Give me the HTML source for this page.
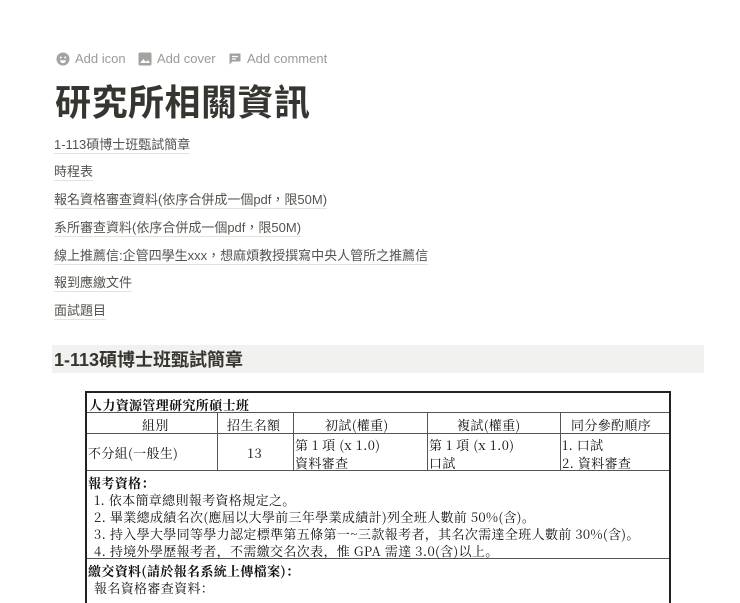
<!DOCTYPE html>
<html><head><meta charset="utf-8"><style>
body{margin:0;width:740px;height:593px;overflow:hidden;background:#fff;font-family:"Liberation Sans","Noto Sans CJK TC",sans-serif;color:#37352f;position:relative}
.a{position:absolute;white-space:nowrap}
.top{top:51px;font-size:13px;color:#9b9a97;display:flex;align-items:center;gap:5px}
.lk{font-size:13px;left:54px;color:#55534e;border-bottom:1px solid #e3e2df;line-height:17px}
.tb{position:absolute;left:85px;top:391px;width:582px;border:2px solid #222;border-bottom:none;font-family:"Noto Serif CJK SC","WenQuanYi Zen Hei",serif;color:#111;font-size:13px;letter-spacing:0.35px;height:210px}
.tb div{position:absolute;white-space:nowrap}
.h{border-top:1px solid #555}
.v{border-left:1px solid #555;top:20px;height:58px}
</style></head><body>
<div class="a top" style="left:56px"><svg width="14" height="14"><circle cx="7" cy="7" r="6.5" fill="#a3a29f"/><circle cx="4.8" cy="5.5" r="1" fill="#fff"/><circle cx="9.2" cy="5.5" r="1" fill="#fff"/><path d="M4 8.3h6a3 3 0 0 1-6 0z" fill="#fff"/></svg>Add icon</div>
<div class="a top" style="left:138px"><svg width="14" height="14"><rect x="0.5" y="0.5" width="13" height="13" rx="1.5" fill="#a3a29f"/><path d="M2 11l3.5-4 2.5 3 2-2 2 3z" fill="#fff"/></svg>Add cover</div>
<div class="a top" style="left:228px"><svg width="14" height="14"><path d="M1.5 1.5h11v8h-8l-3 3z" fill="#a3a29f"/><path d="M4 4.5h6M4 7h4" stroke="#fff" stroke-width="1.2"/></svg>Add comment</div>
<div class="a" style="left:55px;top:74px;font-size:36px;font-weight:bold;color:#37352f;letter-spacing:0.5px">研究所相關資訊</div>
<div class="a lk" style="top:136px">1-113碩博士班甄試簡章</div>
<div class="a lk" style="top:163px">時程表</div>
<div class="a lk" style="top:191px">報名資格審查資料(依序合併成一個pdf，限50M)</div>
<div class="a lk" style="top:219px">系所審查資料(依序合併成一個pdf，限50M)</div>
<div class="a lk" style="top:247px">線上推薦信:企管四學生xxx，想麻煩教授撰寫中央人管所之推薦信</div>
<div class="a lk" style="top:274px">報到應繳文件</div>
<div class="a lk" style="top:302px">面試題目</div>
<div class="a" style="left:52px;top:345px;width:652px;height:28px;background:#f1f1ef"></div>
<div class="a" style="left:54px;top:346px;font-size:18px;font-weight:600;color:#37352f">1-113碩博士班甄試簡章</div>
<div class="tb">
<div style="left:2px;top:2px;font-weight:bold">人力資源管理研究所碩士班</div>
<div class="h" style="left:0;top:19px;width:582px"></div>
<div class="h" style="left:0;top:40px;width:582px"></div>
<div class="h" style="left:0;top:77px;width:582px"></div>
<div class="h" style="left:0;top:165px;width:582px"></div>
<div class="v" style="left:130px"></div><div class="v" style="left:206px"></div><div class="v" style="left:340px"></div><div class="v" style="left:473px"></div>
<div style="left:55px;top:22px">組別</div>
<div style="left:140px;top:22px">招生名額</div>
<div style="left:238px;top:22px">初試(權重)</div>
<div style="left:370px;top:22px">複試(權重)</div>
<div style="left:484px;top:22px">同分參酌順序</div>
<div style="left:1px;top:50px">不分組(一般生)</div>
<div style="left:160px;top:50px">13</div>
<div style="left:208px;top:42px">第 1 項 (x 1.0)</div>
<div style="left:208px;top:60px">資料審查</div>
<div style="left:342px;top:42px">第 1 項 (x 1.0)</div>
<div style="left:342px;top:60px">口試</div>
<div style="left:475px;top:42px">1. 口試</div>
<div style="left:475px;top:60px">2. 資料審查</div>
<div style="left:1px;top:80px;font-weight:bold">報考資格：</div>
<div style="left:7px;top:97px">1. 依本簡章總則報考資格規定之。</div>
<div style="left:7px;top:114px">2. 畢業總成績名次(應屆以大學前三年學業成績計)列全班人數前 50%(含)。</div>
<div style="left:7px;top:131px">3. 持入學大學同等學力認定標準第五條第一~三款報考者，其名次需達全班人數前 30%(含)。</div>
<div style="left:7px;top:148px">4. 持境外學歷報考者，不需繳交名次表，惟 GPA 需達 3.0(含)以上。</div>
<div style="left:1px;top:168px;font-weight:bold">繳交資料(請於報名系統上傳檔案)：</div>
<div style="left:7px;top:185px">報名資格審查資料：</div>
</div>
</body></html>
